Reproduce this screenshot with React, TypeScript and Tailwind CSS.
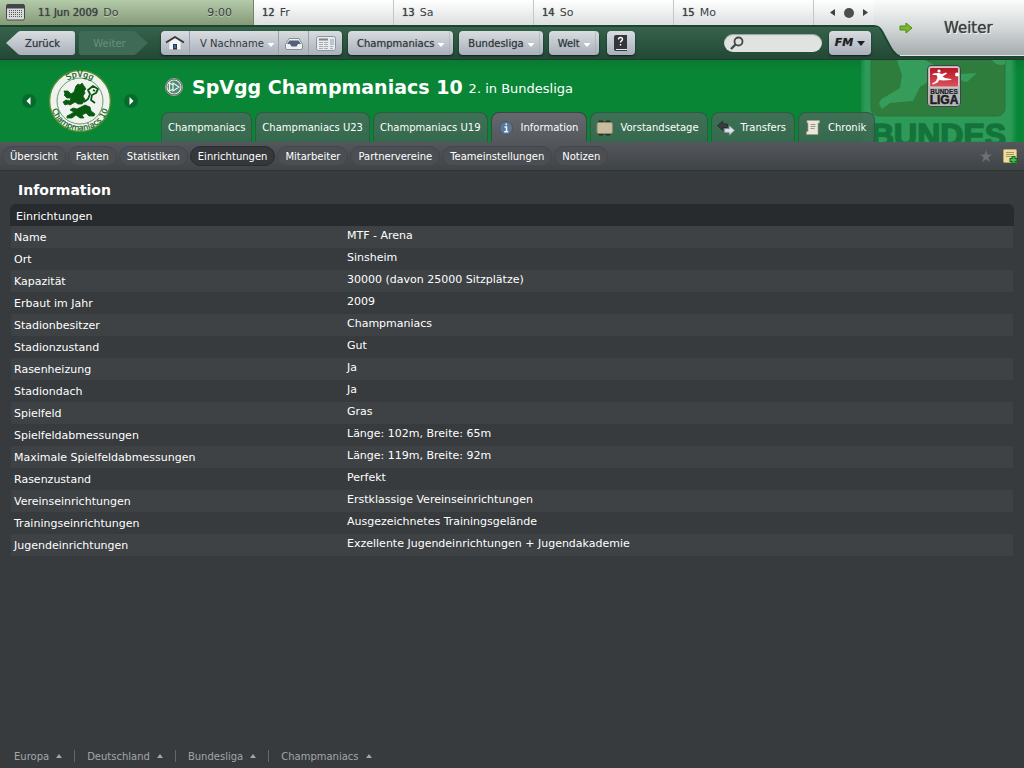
import React, { useState } from 'react';
import clsx from 'clsx';

const days = [
  { date: '12', day: 'Fr' },
  { date: '13', day: 'Sa' },
  { date: '14', day: 'So' },
  { date: '15', day: 'Mo' },
];

const subNav = [
  'Übersicht',
  'Fakten',
  'Statistiken',
  'Einrichtungen',
  'Mitarbeiter',
  'Partnervereine',
  'Teameinstellungen',
  'Notizen',
];

const facilities = [
  { label: 'Name', value: 'MTF - Arena' },
  { label: 'Ort', value: 'Sinsheim' },
  { label: 'Kapazität', value: '30000 (davon 25000 Sitzplätze)' },
  { label: 'Erbaut im Jahr', value: '2009' },
  { label: 'Stadionbesitzer', value: 'Champmaniacs' },
  { label: 'Stadionzustand', value: 'Gut' },
  { label: 'Rasenheizung', value: 'Ja' },
  { label: 'Stadiondach', value: 'Ja' },
  { label: 'Spielfeld', value: 'Gras' },
  { label: 'Spielfeldabmessungen', value: 'Länge: 102m, Breite: 65m' },
  { label: 'Maximale Spielfeldabmessungen', value: 'Länge: 119m, Breite: 92m' },
  { label: 'Rasenzustand', value: 'Perfekt' },
  { label: 'Vereinseinrichtungen', value: 'Erstklassige Vereinseinrichtungen' },
  { label: 'Trainingseinrichtungen', value: 'Ausgezeichnetes Trainingsgelände' },
  { label: 'Jugendeinrichtungen', value: 'Exzellente Jugendeinrichtungen + Jugendakademie' },
];

const breadcrumbs = ['Europa', 'Deutschland', 'Bundesliga', 'Champmaniacs'];

const silver =
  'flex h-6 items-center rounded bg-linear-to-b from-[#d9dde1] to-[#a9b0ba] text-[10px] text-[#30363a] shadow-[0_1px_2px_rgba(0,0,0,0.6)] [text-shadow:0_0_1px_rgba(48,54,58,0.6)]';

function Triangle({ className, points = '0,0 8,0 4,4' }: { className?: string; points?: string }) {
  return (
    <svg viewBox="0 0 8 8" className={clsx('h-2 w-2 shrink-0', className)} fill="currentColor">
      <polygon points={points} />
    </svg>
  );
}

function CalendarIcon() {
  return (
    <svg viewBox="0 0 20 17" className="h-[17px] w-5">
      <rect x="0.5" y="0.5" width="18" height="15.5" rx="1.5" fill="#d9dbd9" stroke="#44484c" />
      <path d="M0.5 2a1.500 1.500 0 0 1 1.500-1.500h15a1.500 1.500 0 0 1 1.500 1.500v2.500h-18z" fill="#42464b" />
      <g stroke="#565a5e" strokeWidth="1" strokeDasharray="1 1">
        <path d="M3 6.500h14M3 8.500h14M3 10.500h14M3 12.500h14" />
      </g>
    </svg>
  );
}

function HomeIcon() {
  return (
    <svg viewBox="0 0 20 16" className="h-4 w-5">
      <path d="M4 7l6-4.500L16 7v7.500H4z" fill="#f3f4f5" stroke="#b4b8bc" strokeWidth="0.6" />
      <path d="M1 7.500L10 2l9 5.500" fill="none" stroke="#33373b" strokeWidth="1.800" strokeLinejoin="round" />
      <rect x="8" y="9" width="4" height="5.500" fill="#33373b" />
      <rect x="9" y="10" width="2" height="3" fill="#2f6fb0" />
    </svg>
  );
}

function InboxIcon() {
  return (
    <svg viewBox="0 0 18 12" className="h-3 w-[18px]">
      <path d="M4 0.500h10l3.500 6v3.500a1.500 1.500 0 0 1-1.500 1.500H2A1.500 1.500 0 0 1 0.500 10V6.500z" fill="#eceef0" stroke="#858c94" />
      <path d="M4.500 2.500h9L16 6h-3l-1.500 2.500h-5L5 6H2z" fill="#52617a" />
    </svg>
  );
}

function NewsIcon() {
  return (
    <svg viewBox="0 0 20 15" className="h-[15px] w-5">
      <rect x="0.500" y="0.500" width="19" height="14" rx="2" fill="#e8eaec" stroke="#8e949a" />
      <path d="M3 3.500h9" stroke="#7c8288" strokeWidth="2" />
      <path d="M3 6.500h4M8 6.500h4M3 8.500h4M8 8.500h4M3 10.500h4M8 10.500h4M3 12.500h4M8 12.500h4M14 10.500h3M14 12.500h3" stroke="#a8adb2" />
      <rect x="14" y="3" width="4" height="6" fill="#b5c7da" />
    </svg>
  );
}

function HelpIcon() {
  return (
    <svg viewBox="0 0 13 16" className="h-4 w-[13px]">
      <path d="M2 0h11v16H2a2 2 0 0 1-2-2V2a2 2 0 0 1 2-2z" fill="#33373b" />
      <path d="M2 14.500h11" stroke="#e8eaec" />
      <path d="M4.500 4.500q0-2 2-2t2 1.800q0 1-1 1.600t-1 1.600M6.500 9v1.600" fill="none" stroke="#fff" strokeWidth="1.400" />
    </svg>
  );
}

function MenuButton({ label }: { label: string }) {
  return (
    <button aria-haspopup="menu" className={clsx(silver, 'pr-[3px] pl-[9px]')}>
      {label}
      <Triangle className="mt-1 ml-[3px] text-white" points="0.5,2 7.5,2 4,6" />
      <span className="ml-1 h-6 w-px bg-[#9aa1a9]/40" />
    </button>
  );
}

function DfbBadge() {
  return (
    <svg viewBox="0 0 18 18" className="h-[18px] w-[18px]">
      <circle cx="9" cy="9" r="8.500" fill="#35483f" stroke="#a9a1a8" />
      <circle cx="9" cy="9" r="7" fill="#4f8a70" stroke="#e4e6e6" strokeWidth="1.200" />
      <path d="M4.500 5v8l3.500-2V7zM8 5v8l6-4z" fill="none" stroke="#e9f3ee" strokeWidth="1.200" />
    </svg>
  );
}

function ClubCrest() {
  return (
    <svg viewBox="0 0 64 64" className="h-16 w-16">
      <defs>
        <path id="crestTop" d="M8 32a24 24 0 0 1 48 0" />
        <path id="crestBottom" d="M2.500 32a29.500 29.500 0 0 0 59 0" />
      </defs>
      <circle cx="32" cy="32" r="30.500" fill="#f0f2f0" stroke="#4f8f2c" strokeWidth="1.500" />
      <circle cx="32" cy="32" r="23" fill="none" stroke="#3f8a45" strokeWidth="0.800" />
      <g fill="#0a5c12" stroke="#0a5c12" strokeWidth="0.2" fontFamily="DejaVu Sans" fontSize="8">
        <text textAnchor="middle">
          <textPath href="#crestTop" startOffset="50%">SpVgg</textPath>
        </text>
        <text textAnchor="middle">
          <textPath href="#crestBottom" startOffset="50%">Champmaniacs 10</textPath>
        </text>
      </g>
      <g fill="#075a0f" stroke="#075a0f" strokeLinejoin="round">
        <path
          strokeWidth="0.800"
          d="M28 17L30 15 32 16 34 14 36 17 38 20 36 22 37 24 35 27 37 31 34 35 30 35 27 33 22 36 20 35 17 36 15 33 18 31 22 32 23 29 19 29 16 26 17 25 16 22 20 22 23 25 26 23z"
        />
        <path d="M36 33L40 30 42 25 40 21 45 17 50 20 48 24 44 26 43 31 47 34M45 21l2 1" fill="none" strokeWidth="1.800" />
        <path
          strokeWidth="0.800"
          d="M22 41L25 39 29 40 33 38 37 36 42 38 43 42 47 45 46 47 41 47 38 44 34 46 36 49 32 49 28 46 24 49 19 49 19 47 23 45 26 43z"
        />
      </g>
    </svg>
  );
}

function BundesligaLogo() {
  return (
    <svg viewBox="0 0 34 42" className="h-[42px] w-[34px]">
      <defs>
        <linearGradient id="blRed" x1="0" y1="0" x2="0" y2="1">
          <stop offset="0" stopColor="#b51525" />
          <stop offset="1" stopColor="#dc525c" />
        </linearGradient>
      </defs>
      <rect x="0.500" y="0.500" width="33" height="41" rx="3.500" fill="#b4b6b7" stroke="#3c4644" />
      <rect x="2.500" y="2.500" width="29" height="19.500" rx="1.500" fill="url(#blRed)" stroke="#eee" strokeWidth="0.700" />
      <circle cx="12" cy="6" r="1.600" fill="#fff" />
      <circle cx="30" cy="9.500" r="2" fill="#fff" />
      <path
        d="M5 10L7 8.300 12 8 15 9 19 7.500 20 8.500 15.500 11.500 18 13 24 14 24.500 15 16 15.500 12.500 15 10.500 17.500 6 19.500 5 18.700 9 16 10.500 12.500 9.500 10z"
        fill="#fff"
      />
      <g fontFamily="Liberation Sans" fontWeight="700" fill="#1d1d1f" stroke="#1d1d1f">
        <text x="17" y="29" fontSize="6.500" strokeWidth="0.200" textAnchor="middle">BUNDES</text>
        <text x="17" y="39" fontSize="12" strokeWidth="0.500" textAnchor="middle">LIGA</text>
      </g>
    </svg>
  );
}

function BannerArt() {
  return (
    <svg viewBox="0 0 163 82" className="absolute top-0 right-0 h-full w-[163px]">
      <defs>
        <linearGradient id="artEdge" x1="0" y1="0" x2="1" y2="0">
          <stop offset="0" stopColor="#2d9a58" stopOpacity="0" />
          <stop offset="0.040" stopColor="#2d9a58" />
          <stop offset="0.960" stopColor="#2d9a58" />
          <stop offset="1" stopColor="#2d9a58" stopOpacity="0" />
        </linearGradient>
      </defs>
      <rect x="-2" width="158" height="82" fill="url(#artEdge)" />
      <path d="M10 0h134v48a8 8 0 0 1-8 8H18a8 8 0 0 1-8-8z" fill="#2f7d3d" stroke="#2a7440" />
      <path
        d="M36 0L41 15 39 28 24 37Q19 39 18 44L21 49 29 43 52 41 59 27 67 22H85L99 20 106 22 116 13 100 14 90 16 75 6 64 0z"
        fill="#369c5b"
      />
      <path d="M131 0h13v4q-8 3-13-4z" fill="#369c5b" />
      <text x="10" y="86" fontFamily="Liberation Sans" fontWeight="700" fontSize="32" fill="#14733a" stroke="#14733a" strokeWidth="1.500">
        BUNDES
      </text>
    </svg>
  );
}

function InfoIcon() {
  return (
    <svg viewBox="0 0 14 14" className="h-[14px] w-[14px]">
      <circle cx="7" cy="7" r="6.500" fill="#5b7796" stroke="#45566b" />
      <path d="M5.500 6h2v4.500M5.200 10.700h4M7.200 2.500v1.800" fill="none" stroke="#f2f5f8" strokeWidth="1.500" />
    </svg>
  );
}

function BoardIcon() {
  return (
    <svg viewBox="0 0 18 16" className="h-4 w-[18px]">
      <path d="M3 3V1h4v2M10 3V1h4v2M3 13v2h4v-2M10 13v2h4v-2" fill="#2d2d2b" stroke="#2d2d2b" />
      <rect x="1" y="2.500" width="15.500" height="11" rx="1.500" fill="#c6bd9f" stroke="#8b8468" />
    </svg>
  );
}

function TransferIcon() {
  return (
    <svg viewBox="0 0 19 16" className="h-4 w-[19px]">
      <path d="M0.500 5.500L6 0.800v3h5v3.600H6v3z" fill="#3b3d40" stroke="#232527" strokeWidth="0.800" />
      <path d="M18.500 10.500L13 5.500v3.200H8v4h5v3z" fill="#dcdfe6" stroke="#8c9099" strokeWidth="0.600" />
    </svg>
  );
}

function ScrollIcon() {
  return (
    <svg viewBox="0 0 14 15" className="h-[15px] w-[14px]">
      <path d="M1 0.500h12.500v2.500h-1.500v11.500H0.500v-3H2V3H1z" fill="#ece7da" stroke="#a39c88" strokeWidth="0.700" />
      <path d="M4.500 4.500h5M4.500 6.500h5M4.500 8.500h4" stroke="#9a9482" />
    </svg>
  );
}

const clubTabs = [
  { label: 'Champmaniacs' },
  { label: 'Champmaniacs U23' },
  { label: 'Champmaniacs U19' },
  { label: 'Information', icon: <InfoIcon /> },
  { label: 'Vorstandsetage', icon: <BoardIcon /> },
  { label: 'Transfers', icon: <TransferIcon /> },
  { label: 'Chronik', icon: <ScrollIcon /> },
];

function TopBar() {
  return (
    <div className="flex h-[25px] items-stretch bg-linear-to-b from-white to-[#dde0e0] text-[11px] text-[#3b4145]">
      <div className="flex w-[254px] items-center border-r border-[#6f8263] bg-linear-to-b from-[#b4cbaa] to-[#869a77] pr-[21px] pl-[6px] [text-shadow:0_1px_0_rgba(255,255,255,0.4)]">
        <CalendarIcon />
        <div className="ml-3 flex flex-1 items-baseline gap-[5px] pt-px">
          <span className="text-[10px] [text-shadow:0_0_1px_#3b4145]">11 Jun 2009</span>
          <span>Do</span>
          <span className="ml-auto">9:00</span>
        </div>
      </div>
      {days.map((d) => (
        <div key={d.date} className="flex w-[140px] items-center border-r border-[#c3c7c7] pl-2">
          <div className="flex items-baseline gap-[5px] pt-px">
            <span className="text-[10px] [text-shadow:0_0_1px_#3b4145]">{d.date}</span>
            <span>{d.day}</span>
          </div>
        </div>
      ))}
      <div className="flex items-center gap-[5px] pl-[14px]">
        <button aria-label="Zurück blättern">
          <Triangle points="7,0 7,7 2,3.500" />
        </button>
        <button aria-label="Heute" className="mx-[3px] h-[10px] w-[10px] rounded-full bg-[#4b4d4f]" />
        <button aria-label="Vor blättern">
          <Triangle points="1,0 1,7 6,3.500" />
        </button>
      </div>
    </div>
  );
}

function Toolbar() {
  return (
    <div className="flex h-[35px] items-center border-t-2 border-b border-t-[#1c4431] border-b-[#1b3b2c] bg-linear-to-b from-[#36624b] to-[#234836] pl-[6px]">
      <button className="relative flex h-6 w-[69px] items-center justify-center pl-1 text-[10px] text-[#30363a] [text-shadow:0_0_1px_rgba(48,54,58,0.6)]">
        <svg viewBox="0 0 69 24" className="absolute inset-0 h-6 w-[69px]">
          <defs>
            <linearGradient id="backFill" x1="0" y1="0" x2="0" y2="1">
              <stop offset="0" stopColor="#d9dde1" />
              <stop offset="1" stopColor="#a9b0ba" />
            </linearGradient>
          </defs>
          <path d="M12 1q1-1 3-1h51a3 3 0 0 1 3 3v18a3 3 0 0 1-3 3H15q-2 0-3-1L0 12z" fill="url(#backFill)" />
        </svg>
        <span className="relative">Zurück</span>
      </button>
      <button disabled className="relative ml-1 flex h-6 w-[69px] items-center justify-center pr-2 text-[10px] text-[#6a8e7b]">
        <svg viewBox="0 0 69 24" className="absolute inset-0 h-6 w-[69px]">
          <path d="M57 1q-1-1-3-1H3a3 3 0 0 0-3 3v18a3 3 0 0 0 3 3h51q2 0 3-1l12-11z" fill="#3f6b56" />
        </svg>
        <span className="relative">Weiter</span>
      </button>

      <div className={clsx(silver, 'ml-[13px]')}>
        <button aria-label="Startseite" className="flex h-6 w-[29px] items-center justify-center border-r border-[#9aa1a9]">
          <HomeIcon />
        </button>
        <button aria-haspopup="menu" className="flex h-6 w-[89px] items-center border-r border-[#9aa1a9] pl-[10px]">
          V Nachname
          <Triangle className="mt-1 ml-[3px] text-white" points="0.5,2 7.5,2 4,6" />
        </button>
        <button aria-label="Posteingang" className="flex h-6 w-[30px] items-center justify-center border-r border-[#9aa1a9] pt-[2px]">
          <InboxIcon />
        </button>
        <button aria-label="Nachrichten" className="flex h-6 w-[33px] items-center justify-center">
          <NewsIcon />
        </button>
      </div>
      <div className="ml-[6px] flex items-center gap-[6px]">
        <MenuButton label="Champmaniacs" />
        <MenuButton label="Bundesliga" />
        <MenuButton label="Welt" />
      </div>
      <button aria-label="Hilfe" className={clsx(silver, 'ml-2 w-7 justify-center')}>
        <HelpIcon />
      </button>

      <div className="mr-[153px] ml-auto flex items-center gap-[7px]">
        <label className="flex h-[18px] w-[98px] items-center rounded-full bg-[#dfe4e1] pl-[6px] shadow-[inset_0_1px_1px_rgba(0,0,0,0.3)]">
          <svg viewBox="0 0 14 14" className="h-[14px] w-[14px] shrink-0" fill="none" stroke="#45494c">
            <circle cx="8.500" cy="5.500" r="4" strokeWidth="1.800" />
            <path d="M5.500 8.500L1 13" strokeWidth="2.400" />
          </svg>
          <input aria-label="Suche" className="w-full min-w-0 bg-transparent px-1 text-[10px] text-[#30363a] outline-none" />
        </label>
        <button aria-haspopup="menu" className={clsx(silver, 'w-[42px] justify-center gap-1')}>
          <span className="text-[11px] font-bold text-[#1d1f21] italic">FM</span>
          <Triangle className="text-[#1d1f21]" points="0,2 8,2 4,7" />
        </button>
      </div>
    </div>
  );
}

function ContinueButton() {
  return (
    <button className="absolute top-0 right-0 z-10 flex h-14 w-[150px] items-center pl-[25px] text-[#3b4145]">
      <svg viewBox="0 0 150 58" className="absolute top-0 right-0 h-[58px] w-[150px]">
        <defs>
          <linearGradient id="continueFill" x1="0" y1="0" x2="0" y2="1">
            <stop offset="0" stopColor="#fbfcfc" />
            <stop offset="0.500" stopColor="#d3d7d8" />
            <stop offset="1" stopColor="#a3aaac" />
          </linearGradient>
        </defs>
        <path d="M0 0h150v58H30q-9 0-14-10L7 31q-3-6-7-6z" fill="#1c4431" />
        <path d="M0 0h150v56H30q-8 0-13-10L9 31q-3-6-9-6z" fill="url(#continueFill)" />
        <path d="M26 55.500h124" stroke="#dfe5e3" />
      </svg>
      <svg viewBox="0 0 14 12" className="relative h-3 w-[14px]">
        <path d="M1 4h6V1l6 5-6 5V8H1z" fill="#7cb62c" stroke="#4f8a18" />
      </svg>
      <span className="relative ml-[31px] text-[15px] [text-shadow:0_0_1px_#3b4145,1px_1px_0_#fff]">Weiter</span>
    </button>
  );
}

function ClubBanner({ activeTab, onTab }: { activeTab: string; onTab: (tab: string) => void }) {
  return (
    <div className="relative flex h-[82px] bg-[#088635] bg-linear-to-b from-[#0a7a32] to-[#088635] to-15%">
      <BannerArt />
      <div className="absolute top-[5px] right-[63px]">
        <BundesligaLogo />
      </div>
      <div className="mr-px flex w-40 items-center justify-center gap-3">
        <button aria-label="Vorheriger Verein" className="flex h-[14px] w-[14px] items-center justify-center rounded-full bg-[#056a2b] text-white">
          <Triangle points="5.500,0 5.500,8 1.500,4" />
        </button>
        <ClubCrest />
        <button aria-label="Nächster Verein" className="flex h-[14px] w-[14px] items-center justify-center rounded-full bg-[#056a2b] text-white">
          <Triangle points="2.500,0 2.500,8 6.500,4" />
        </button>
      </div>
      <div className="relative flex flex-col justify-between">
        <div className="flex items-center pt-[13px] pl-1 text-white">
          <DfbBadge />
          <h1 className="ml-[9px] text-[19px] leading-7 font-bold">SpVgg Champmaniacs 10</h1>
          <span className="ml-[6px] pt-[3px] text-[13px]">2. in Bundesliga</span>
        </div>
        <div className="flex h-[30px] items-stretch gap-[3px]">
          {clubTabs.map((tab) => (
            <button
              key={tab.label}
              onClick={() => onTab(tab.label)}
              className={clsx(
                'flex items-center gap-[6px] rounded-t-lg border border-b-0 text-[10px] text-white',
                tab.icon ? 'pr-2 pl-[5px]' : 'px-[6px]',
                tab.label === activeTab
                  ? 'border-[#3f4447] bg-linear-to-b from-[#65686d] to-[#54585d]'
                  : 'border-[#2c5b41] bg-linear-to-b from-[#456e59]/90 to-[#3a6650]/90'
              )}
            >
              {tab.icon && <span className="flex w-[18px] justify-center">{tab.icon}</span>}
              {tab.label}
            </button>
          ))}
        </div>
      </div>
    </div>
  );
}

function SubNav({ active, onSelect }: { active: string; onSelect: (item: string) => void }) {
  return (
    <div className="flex h-[29px] items-center border-b border-[#303437] bg-linear-to-b from-[#54585d] to-[#3f4447] pr-[6px] pl-[2px]">
      <nav className="flex gap-[2px]">
        {subNav.map((item) => (
          <button
            key={item}
            onClick={() => onSelect(item)}
            className={clsx(
              'h-5 rounded-full border px-[7px] text-[10px] text-white',
              item === active ? 'border-[#292d30] bg-[#34383b]' : 'border-[#43474b] bg-[#4b4f53]'
            )}
          >
            {item}
          </button>
        ))}
      </nav>
      <div className="ml-auto flex items-center gap-2">
        <button aria-label="Favorit">
          <svg viewBox="0 0 16 16" className="h-4 w-4">
            <path d="M8 2l1.500 4.500H14l-3.700 2.700L11.800 14 8 11.200 4.200 14l1.500-4.800L2 6.500h4.500z" fill="#6d7175" stroke="#5b5f63" strokeWidth="0.600" />
          </svg>
        </button>
        <button aria-label="Notiz hinzufügen">
          <svg viewBox="0 0 16 16" className="h-4 w-4">
            <rect x="1.500" y="1.500" width="13" height="13" rx="1" fill="#efdc9f" stroke="#b9a56a" />
            <path d="M4 4.500h8M4 6.500h8M4 8.500h5" stroke="#a5956a" />
            <path d="M11.500 8v8M7.500 12h8" stroke="#155f1c" strokeWidth="4" />
            <path d="M11.500 9v6M8.500 12h6" stroke="#3fc04c" strokeWidth="2" />
          </svg>
        </button>
      </div>
    </div>
  );
}

export default function App() {
  const [activeTab, setActiveTab] = useState('Information');
  const [activeItem, setActiveItem] = useState('Einrichtungen');

  return (
    <div className="flex min-h-screen flex-col bg-[#373b3e] font-['DejaVu_Sans',sans-serif] text-white">
      <header className="relative">
        <TopBar />
        <Toolbar />
        <ContinueButton />
      </header>
      <ClubBanner activeTab={activeTab} onTab={setActiveTab} />
      <SubNav active={activeItem} onSelect={setActiveItem} />

      <main className="flex-1 px-[10px] pt-2">
        <h2 className="pl-2 text-[14px] leading-[22px] font-bold">Information</h2>
        <section className="mt-[3px] text-[11px]">
          <h3 className="flex h-[22px] items-center rounded-t-md bg-[#282b2e] px-[6px] pt-1">Einrichtungen</h3>
          <div className="px-px">
            <table className="w-full border-collapse">
              <tbody>
                {facilities.map((f) => (
                  <tr key={f.label} className="h-[22px] odd:bg-[#3e4245]">
                    <th scope="row" className="w-1/3 pt-[2px] pl-[3px] text-left leading-4 font-normal">{f.label}</th>
                    <td className="pb-[2px] pl-[2px] leading-4">{f.value}</td>
                  </tr>
                ))}
              </tbody>
            </table>
          </div>
        </section>
      </main>

      <footer className="flex h-6 items-center pl-[14px] text-[10px] text-[#a3a6a8]">
        {breadcrumbs.map((crumb, i) => (
          <button
            key={crumb}
            className={clsx('flex h-3 items-center gap-[6px] pr-[11px]', i > 0 && 'border-l border-[#63676a] pl-3')}
          >
            {crumb}
            <Triangle points="1,6 7,6 4,2" />
          </button>
        ))}
      </footer>
    </div>
  );
}
